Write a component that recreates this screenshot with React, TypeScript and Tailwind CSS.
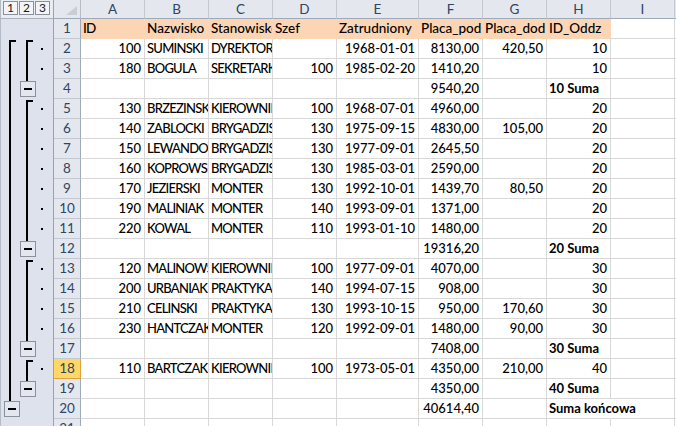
import React from "react";

const WC = ["w-[64px]", "w-[64px]", "w-[64px]", "w-[64px]", "w-[82px]", "w-[64px]", "w-[64px]", "w-[64px]", "w-[64px]", "w-[64px]"];
const LETTERS = ["A", "B", "C", "D", "E", "F", "G", "H", "I", "J"];

type Row = string[];

const DATA: Row[] = [
  ["ID", "Nazwisko", "Stanowisko", "Szef", "Zatrudniony", "Placa_podst", "Placa_dod", "ID_Oddz", ""],
  ["100", "SUMINSKI", "DYREKTOR", "", "1968-01-01", "8130,00", "420,50", "10", ""],
  ["180", "BOGULA", "SEKRETARKA", "100", "1985-02-20", "1410,20", "", "10", ""],
  ["", "", "", "", "", "9540,20", "", "10 Suma", ""],
  ["130", "BRZEZINSKI", "KIEROWNIK", "100", "1968-07-01", "4960,00", "", "20", ""],
  ["140", "ZABLOCKI", "BRYGADZISTA", "130", "1975-09-15", "4830,00", "105,00", "20", ""],
  ["150", "LEWANDOWSKI", "BRYGADZISTA", "130", "1977-09-01", "2645,50", "", "20", ""],
  ["160", "KOPROWSKI", "BRYGADZISTA", "130", "1985-03-01", "2590,00", "", "20", ""],
  ["170", "JEZIERSKI", "MONTER", "130", "1992-10-01", "1439,70", "80,50", "20", ""],
  ["190", "MALINIAK", "MONTER", "140", "1993-09-01", "1371,00", "", "20", ""],
  ["220", "KOWAL", "MONTER", "110", "1993-01-10", "1480,00", "", "20", ""],
  ["", "", "", "", "", "19316,20", "", "20 Suma", ""],
  ["120", "MALINOWSKI", "KIEROWNIK", "100", "1977-09-01", "4070,00", "", "30", ""],
  ["200", "URBANIAK", "PRAKTYKANT", "140", "1994-07-15", "908,00", "", "30", ""],
  ["210", "CELINSKI", "PRAKTYKANT", "130", "1993-10-15", "950,00", "170,60", "30", ""],
  ["230", "HANTCZAK", "MONTER", "120", "1992-09-01", "1480,00", "90,00", "30", ""],
  ["", "", "", "", "", "7408,00", "", "30 Suma", ""],
  ["110", "BARTCZAK", "KIEROWNIK", "100", "1973-05-01", "4350,00", "210,00", "40", ""],
  ["", "", "", "", "", "4350,00", "", "40 Suma", ""],
  ["", "", "", "", "", "40614,40", "", "Suma końcowa", ""],
  ["", "", "", "", "", "", "", "", ""],
];

const L1: Record<number, string> = { 2: "start", 20: "box" };
for (let i = 3; i <= 19; i++) L1[i] = "line";
const L2: Record<number, string> = {
  2: "start", 3: "line", 4: "box",
  5: "start", 6: "line", 7: "line", 8: "line", 9: "line", 10: "line", 11: "line", 12: "box",
  13: "start", 14: "line", 15: "line", 16: "line", 17: "box",
  18: "start", 19: "box",
};
const DOTS = new Set([2, 3, 5, 6, 7, 8, 9, 10, 11, 13, 14, 15, 16, 18]);

function Lane({ kind, x, bx }: { kind?: string; x: number; bx: number }) {
  if (!kind) return null;
  if (kind === "start")
    return (
      <g fill="#000">
        <rect x={x} y={1} width={2} height={19} />
        <rect x={x} y={1} width={7} height={2} />
      </g>
    );
  if (kind === "line") return <rect x={x} y={0} width={2} height={20} fill="#000" />;
  return (
    <g>
      <rect x={x} y={0} width={2} height={2} fill="#000" />
      <rect x={bx + 0.5} y={2.5} width={15} height={15} fill="#e3e7f0" stroke="#8a919c" strokeWidth={1} />
      <rect x={bx + 4} y={9} width={8} height={2} fill="#000" />
    </g>
  );
}

function OutlineCell({ n }: { n: number }) {
  return (
    <div className="w-[54px] shrink-0 h-full bg-[#dde2ec] border-l border-r border-l-[#b4bbc6] border-r-[#9aa2ae]">
      <svg width="52" height="20" className="block">
        <Lane kind={L1[n]} x={8} bx={3} />
        <Lane kind={L2[n]} x={25} bx={19} />
        {DOTS.has(n) && <rect x={40} y={9} width={2} height={2} fill="#000" />}
      </svg>
    </div>
  );
}

function isNum(s: string) {
  return /^[0-9][0-9,.\-]*$/.test(s);
}

export default function App() {
  return (
    <div
      className="w-[676px] h-[426px] overflow-hidden bg-white flex flex-col text-black"
      style={{ fontFamily: "Lato, 'Liberation Sans', sans-serif" }}
    >
      {/* header row */}
      <div className="flex h-[19px] shrink-0">
        <div className="w-[54px] shrink-0 h-full bg-[#e9ecf1] border-l border-r border-b border-l-[#b4bbc6] border-r-[#9aa2ae] border-b-[#aab1bc] flex items-start pt-[1px] pl-[2px] gap-[1px]">
          {["1", "2", "3"].map((b) => (
            <div
              key={b}
              className="w-[15px] h-[14px] border border-[#8a919c] bg-[#f3f4f6] flex items-center justify-center text-[12px] leading-none text-[#1a1a1a]"
            >
              {b}
            </div>
          ))}
        </div>
        <div className="w-[27px] shrink-0 h-full bg-[#e4e8ee] border-r border-b border-r-[#b5bcc6] border-b-[#9eaab8] flex items-end justify-end pr-[3px] pb-[3px]">
          <svg width="11" height="9" className="block">
            <polygon points="11,0 11,9 0,9" fill="#c9ced6" />
          </svg>
        </div>
        {LETTERS.map((l, i) => (
          <div
            key={l}
            className={`${WC[i]} shrink-0 h-full bg-[#e4e8ee] border-r border-b border-r-[#c3c9d2] border-b-[#9eaab8] flex items-center justify-center text-[13.5px] text-[#2f4564]`}
          >
            {l}
          </div>
        ))}
      </div>
      {DATA.map((row, ri) => {
        const n = ri + 1;
        const isHead = n === 1;
        const sel = n === 18;
        return (
          <div key={n} className="flex h-[20px] shrink-0">
            <OutlineCell n={n} />
            <div
              className={
                sel
                  ? "w-[27px] shrink-0 h-full bg-[#fdd866] border-r border-b border-r-[#e2a13a] border-b-[#e2a13a] flex items-center justify-center text-[13.5px] text-[#2f4564]"
                  : "w-[27px] shrink-0 h-full bg-[#e4e8ee] border-r border-b border-r-[#9eaab8] border-b-[#c3c9d2] flex items-center justify-center text-[13.5px] text-[#2f4564]"
              }
            >
              {n}
            </div>
            {[...row, ""].map((v, ci) => {
              const peach = isHead && ci < 8;
              const num = !isHead && isNum(v);
              const bold = / Suma$/.test(v);
              const spill = n === 20 && ci === 7;
              const caps = !num && v !== "" && v === v.toUpperCase() && /[A-Z]/.test(v);
              return (
                <div
                  key={ci}
                  className={[
                    WC[ci],
                    "shrink-0 h-full flex items-center whitespace-nowrap border-b border-r font-medium",
                    isHead ? "text-[13.5px]" : "text-[13px]",
                    caps ? "tracking-[-0.75px]" : "",
                    peach ? "bg-[#fcd5b4] border-[#fcd5b4]" : "border-[#d8d8d8]",
                    spill ? "overflow-visible border-r-transparent relative z-10" : "overflow-hidden",
                    num ? "justify-end pr-[3px]" : "justify-start pl-[2px]",
                    bold || spill ? "!font-bold" : "",
                  ].join(" ")}
                >
                  {v}
                </div>
              );
            })}
          </div>
        );
      })}
    </div>
  );
}
